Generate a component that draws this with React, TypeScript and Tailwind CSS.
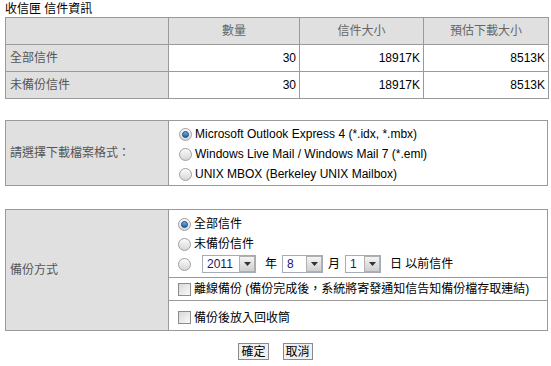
const font = { fontFamily: '"Liberation Sans", "Noto Sans CJK TC", sans-serif' }

function Radio(props: { checked?: boolean }) {
  return (
    <span className="inline-flex w-[13px] h-[13px] shrink-0 items-center justify-center rounded-full border border-[#a0a0a0] bg-gradient-to-b from-[#fbfbfb] to-[#d6d6d6]">
      {props.checked && (
        <span className="w-[7px] h-[7px] rounded-full bg-gradient-to-b from-[#6fb2ea] to-[#1a5fa8] border border-[#234f7e]" />
      )}
    </span>
  )
}

function Checkbox() {
  return (
    <span className="inline-block w-[13px] h-[13px] shrink-0 border border-[#8c8c8c] bg-gradient-to-br from-[#d8d8d8] to-[#fafafa]" />
  )
}

function Select(props: { value: string; width: string }) {
  return (
    <span
      className={`inline-flex h-[18px] items-center border border-[#a5acb5] bg-white ${props.width}`}
    >
      <span className="flex-1 pl-[4px] text-[#1a1a60] leading-[16px]">{props.value}</span>
      <span className="flex w-[16px] h-[16px] items-center justify-center border border-[#b0b0b0] bg-gradient-to-b from-[#f4f4f4] to-[#cfcfcf]">
        <svg width="7" height="4" viewBox="0 0 7 4">
          <path d="M0 0h7L3.5 4z" fill="#333" />
        </svg>
      </span>
    </span>
  )
}

function OptionRow(props: { checked?: boolean; label: React.ReactNode }) {
  return (
    <div className="flex h-[20px] items-center gap-[3px]">
      <Radio checked={props.checked} />
      <span className="text-black">{props.label}</span>
    </div>
  )
}

function App() {
  const labelCell = 'bg-[#e0e0e0] text-[#555] border border-[#9a9a9a] pl-[4px] align-middle'
  const cell = 'border border-[#9a9a9a]'
  return (
    <div className="w-[551px] h-[366px] bg-white text-[12px] leading-[14px]" style={font}>
      <div className="h-[17px] pl-[5px] pt-[2px] text-black">收信匣 信件資訊</div>

      <div className="pl-[5px]">
        <table className="w-[543px] table-fixed border-collapse">
          <colgroup>
            <col className="w-[163px]" />
            <col className="w-[131px]" />
            <col className="w-[124px]" />
            <col className="w-[125px]" />
          </colgroup>
          <tbody>
            <tr className="h-[27px] bg-[#e0e0e0] text-[#666]">
              <td className={cell}></td>
              <td className={`${cell} text-center`}>數量</td>
              <td className={`${cell} text-center`}>信件大小</td>
              <td className={`${cell} text-center`}>預估下載大小</td>
            </tr>
            {['全部信件', '未備份信件'].map((name) => (
              <tr key={name} className="h-[27px]">
                <td className={labelCell}>{name}</td>
                <td className={`${cell} text-right pr-[3px] text-black`}>30</td>
                <td className={`${cell} text-right pr-[3px] text-black`}>18917K</td>
                <td className={`${cell} text-right pr-[3px] text-black`}>8513K</td>
              </tr>
            ))}
          </tbody>
        </table>
      </div>

      <div className="pl-[5px] pt-[21px]">
        <table className="w-[543px] table-fixed border-collapse">
          <colgroup>
            <col className="w-[163px]" />
            <col />
          </colgroup>
          <tbody>
            <tr>
              <td className={labelCell}>請選擇下載檔案格式：</td>
              <td className={`${cell} pl-[10px] pt-[3px] pb-[1px]`}>
                <OptionRow checked label="Microsoft Outlook Express 4 (*.idx, *.mbx)" />
                <OptionRow label="Windows Live Mail / Windows Mail 7 (*.eml)" />
                <OptionRow label="UNIX MBOX (Berkeley UNIX Mailbox)" />
              </td>
            </tr>
          </tbody>
        </table>
      </div>

      <div className="pl-[5px] pt-[23px]">
        <table className="w-[543px] table-fixed border-collapse">
          <colgroup>
            <col className="w-[163px]" />
            <col />
          </colgroup>
          <tbody>
            <tr>
              <td rowSpan={3} className={labelCell}>
                備份方式
              </td>
              <td className={`${cell} pl-[9px] pt-[4px] pb-[3px]`}>
                <OptionRow checked label="全部信件" />
                <OptionRow label="未備份信件" />
                <div className="flex h-[20px] items-center text-black">
                  <Radio />
                  <span className="ml-[11px]">
                    <Select value="2011" width="w-[54px]" />
                  </span>
                  <span className="ml-[9px]">年</span>
                  <span className="ml-[5px]">
                    <Select value="8" width="w-[41px]" />
                  </span>
                  <span className="ml-[5px]">月</span>
                  <span className="ml-[5px]">
                    <Select value="1" width="w-[36px]" />
                  </span>
                  <span className="ml-[9px]">日 以前信件</span>
                </div>
              </td>
            </tr>
            <tr className="h-[23px]">
              <td className={`${cell} pl-[9px]`}>
                <div className="flex items-center gap-[3px] text-black">
                  <Checkbox />
                  <span>離線備份 (備份完成後，系統將寄發通知信告知備份檔存取連結)</span>
                </div>
              </td>
            </tr>
            <tr className="h-[30px]">
              <td className={`${cell} pl-[9px] pt-[4px]`}>
                <div className="flex items-center gap-[3px] text-black">
                  <Checkbox />
                  <span>備份後放入回收筒</span>
                </div>
              </td>
            </tr>
          </tbody>
        </table>
      </div>

      <div className="flex justify-center gap-[14px] pt-[12px]">
        <button className="h-[17px] px-[2px] border border-[#8a8a8a] bg-[#f0f0f0] text-black text-[12px] leading-[14px]">
          確定
        </button>
        <button className="h-[17px] px-[2px] border border-[#8a8a8a] bg-[#f0f0f0] text-black text-[12px] leading-[14px]">
          取消
        </button>
      </div>
    </div>
  )
}

export default App
